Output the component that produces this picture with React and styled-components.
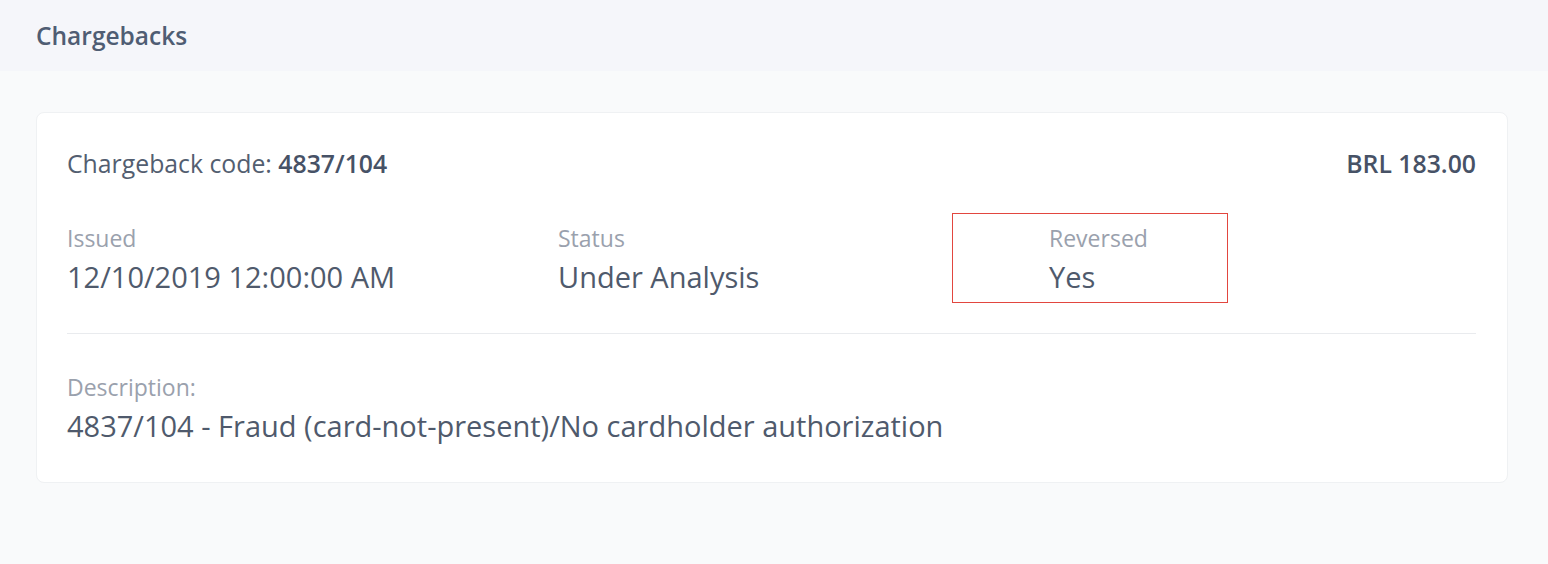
import React from "react";
import styled, { createGlobalStyle } from "styled-components";

const GlobalStyle = createGlobalStyle`
  html, body {
    margin: 0;
    padding: 0;
    background: #f9fafb;
    font-family: "Open Sans", "Noto Sans", sans-serif;
  }
`;

const Page = styled.div`
  width: 1548px;
  height: 564px;
  background: #f9fafb;
`;

const TopBar = styled.div`
  height: 71px;
  background: #f5f6fa;
  display: flex;
  align-items: center;
  padding: 0 36px;
  box-sizing: border-box;
`;

const Title = styled.h1`
  margin: 0;
  font-size: 24.5px;
  line-height: 32px;
  font-weight: 600;
  color: #4f5d73;
`;

const Body = styled.div`
  padding: 41px 40px 0 36px;
`;

const Card = styled.div`
  background: #fff;
  border: 1px solid #eff1f3;
  border-radius: 8px;
  padding: 34px 31px 0 30px;
  box-sizing: border-box;
  height: 371px;
`;

const HeadRow = styled.div`
  display: flex;
  justify-content: space-between;
  align-items: center;
  font-size: 24.8px;
  line-height: 32px;
  color: #535e70;
`;

const Strong = styled.span`
  font-weight: 600;
  color: #475266;
`;

const Fields = styled.div`
  display: grid;
  grid-template-columns: 491px 491px 1fr;
  margin-top: 44px;
  padding-bottom: 37px;
  border-bottom: 1px solid #e9ebee;
`;

const Field = styled.div`
  position: relative;
  display: flex;
  flex-direction: column;
`;

const Label = styled.span`
  font-size: 23px;
  color: #9aa1ad;
  line-height: 30px;
`;

const Value = styled.span`
  font-size: 29px;
  color: #4f5a6c;
  line-height: 38px;
  margin-top: 5px;
`;

const Highlight = styled.div`
  position: absolute;
  left: -97px;
  top: -10px;
  width: 276px;
  height: 90px;
  border: 1.5px solid #e2463f;
  box-sizing: border-box;
  pointer-events: none;
`;

const Description = styled.div`
  display: flex;
  flex-direction: column;
  margin-top: 38px;
`;

export default function App() {
  return (
    <Page>
      <GlobalStyle />
      <TopBar>
        <Title>Chargebacks</Title>
      </TopBar>
      <Body>
        <Card>
          <HeadRow>
            <span>
              Chargeback code: <Strong>4837/104</Strong>
            </span>
            <Strong>BRL 183.00</Strong>
          </HeadRow>
          <Fields>
            <Field>
              <Label>Issued</Label>
              <Value>12/10/2019 12:00:00 AM</Value>
            </Field>
            <Field>
              <Label>Status</Label>
              <Value>Under Analysis</Value>
            </Field>
            <Field>
              <Highlight />
              <Label>Reversed</Label>
              <Value>Yes</Value>
            </Field>
          </Fields>
          <Description>
            <Label>Description:</Label>
            <Value>4837/104 - Fraud (card-not-present)/No cardholder authorization</Value>
          </Description>
        </Card>
      </Body>
    </Page>
  );
}
